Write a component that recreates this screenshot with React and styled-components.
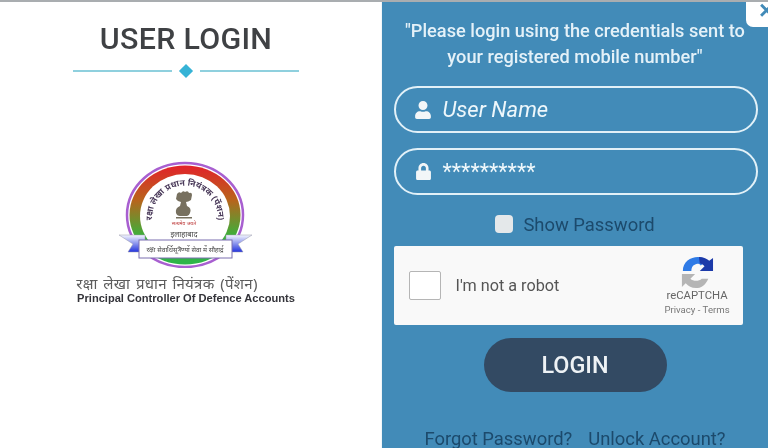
import React from "react";
import styled, { createGlobalStyle } from "styled-components";
import { FaUser, FaLock } from "react-icons/fa";

const GlobalStyle = createGlobalStyle`
  html, body {
    margin: 0;
    height: 100%;
    overflow: hidden;
    background: #fff;
  }
  * {
    box-sizing: border-box;
  }
`;

const Modal = styled.div`
  position: relative;
  width: 768px;
  height: 448px;
  display: grid;
  grid-template-columns: 381px 387px;
  border-top: 2px solid #a9adb0;
  font-family: Roboto, "Liberation Sans", sans-serif;
  overflow: hidden;
  filter: blur(0.45px);
`;

const LeftPanel = styled.section`
  display: flex;
  flex-direction: column;
  align-items: center;
  padding: 20px 9px 0 0;
  background: #fff;
`;

const Title = styled.h1`
  margin: 0;
  font-size: 30.4px;
  line-height: 34px;
  font-weight: 500;
  color: #3f4144;
  letter-spacing: 0.3px;
`;

const Divider = styled.div`
  display: flex;
  align-items: center;
  gap: 7px;
  margin-top: 10px;
`;

const DividerLine = styled.span`
  width: 99px;
  height: 1.5px;
  background: #8fd0de;
`;

const Diamond = styled.span`
  width: 10px;
  height: 10px;
  margin: 0 2px;
  background: #36b3d6;
  transform: rotate(45deg);
`;

const Logo = styled.svg`
  display: block;
  margin-top: 84px;
`;

const HindiName = styled.div`
  margin-top: 6px;
  margin-right: 38px;
  font-family: "Noto Sans", "Noto Sans CJK SC", sans-serif;
  font-size: 15px;
  line-height: 18px;
  letter-spacing: 0.3px;
  word-spacing: 1.5px;
  color: #5c5c5c;
`;

const EnglishName = styled.div`
  font-family: "Liberation Sans", sans-serif;
  font-size: 11.1px;
  line-height: 12px;
  font-weight: 700;
  color: #34343a;
  white-space: nowrap;
`;

const RightPanel = styled.section`
  display: flex;
  flex-direction: column;
  align-items: center;
  padding: 16px 0 0 0;
  background: #428bb8;
  border-left: 1px solid #f1f6f9;
`;

const Notice = styled.p`
  margin: 0;
  width: 350px;
  font-size: 18.2px;
  line-height: 26px;
  font-weight: 500;
  text-align: center;
  color: #e4f1f8;
`;

const Field = styled.div`
  width: 364px;
  height: 47px;
  margin-top: ${(p) => p.$top}px;
  margin-left: 1px;
  display: flex;
  align-items: center;
  gap: 10px;
  padding: 0 0 0 18px;
  border: 2px solid #e2f1f8;
  border-radius: 24px;
  color: #eef7fb;
  font-size: 22px;
`;

const FieldIcon = styled.span`
  display: flex;
  width: 19px;
  justify-content: center;
  color: #f2f6f8;
`;

const Placeholder = styled.span`
  font-style: italic;
  font-weight: 400;
`;

const Masked = styled.span`
  font-size: 21.6px;
  line-height: 24px;
  margin-top: 1px;
`;

const ShowRow = styled.label`
  display: flex;
  align-items: center;
  gap: 10px;
  margin-top: 17px;
  height: 24px;
  font-size: 18.4px;
  color: #1c4a6c;
`;

const Tick = styled.span`
  width: 18px;
  height: 18px;
  border-radius: 4px;
  background: #e4e8ea;
`;

const Captcha = styled.div`
  width: 349px;
  height: 79px;
  margin-top: 10px;
  margin-right: 14px;
  display: flex;
  align-items: center;
  padding: 0 0 0 15px;
  background: #f9f9f9;
  border-radius: 2px;
`;

const CaptchaBox = styled.span`
  width: 32px;
  height: 29px;
  background: #fff;
  border: 1.5px solid #b5b5b5;
  border-radius: 2px;
`;

const CaptchaLabel = styled.span`
  margin-left: 15px;
  font-size: 16.2px;
  color: #555;
`;

const CaptchaBrand = styled.div`
  margin-left: auto;
  width: 78px;
  display: flex;
  flex-direction: column;
  align-items: center;
  padding-right: 13px;
`;

const BrandName = styled.span`
  margin-top: 1px;
  font-size: 11.3px;
  line-height: 12px;
  color: #666;
`;

const BrandLinks = styled.span`
  margin-top: 3px;
  font-size: 9.6px;
  line-height: 10px;
  color: #777;
  white-space: nowrap;
`;

const LoginButton = styled.button`
  width: 183px;
  height: 54px;
  margin-top: 13px;
  border: none;
  border-radius: 27px;
  background: #334a63;
  color: #eef2f5;
  font-family: inherit;
  font-size: 23.4px;
  font-weight: 500;
`;

const Links = styled.div`
  display: flex;
  gap: 16px;
  margin-top: 37px;
  font-size: 18.4px;
  line-height: 20px;
  color: #1c4a6c;
  white-space: nowrap;
`;

const CloseButton = styled.div`
  position: absolute;
  top: -2px;
  right: 0;
  width: 22px;
  height: 27px;
  padding: 0 0 0 13px;
  background: #fff;
  border-bottom-left-radius: 7px;
  color: #428bb8;
  font-family: "Liberation Sans", sans-serif;
  font-size: 26px;
  line-height: 20px;
  font-weight: 700;
  overflow: hidden;
`;

function EmblemLogo() {
  return (
    <Logo width="136" height="108" viewBox="0 0 136 108">
      <defs>
        <linearGradient id="ring" x1="0" y1="0" x2="0" y2="1">
          <stop offset="0" stopColor="#e2222a" />
          <stop offset="0.35" stopColor="#b8641c" />
          <stop offset="0.7" stopColor="#3fae3a" />
          <stop offset="1" stopColor="#2db54a" />
        </linearGradient>
        <linearGradient id="ribbon" x1="0" y1="0" x2="0" y2="1">
          <stop offset="0" stopColor="#f4f6ff" />
          <stop offset="1" stopColor="#2233dd" />
        </linearGradient>
        <path id="arc" d="M 36 70 A 33 33 0 1 1 98 70" fill="none" />
      </defs>
      <ellipse cx="67" cy="55" rx="58" ry="52" fill="#fff" stroke="#a85fd0" strokeWidth="2.5" />
      <ellipse cx="67" cy="55" rx="55.5" ry="49.5" fill="url(#ring)" />
      <ellipse cx="67" cy="56" rx="45" ry="42" fill="#fff" />
      <text fontSize="8.6" fontWeight="700" fill="#4a3a5a" fontFamily="'Noto Sans', sans-serif">
        <textPath href="#arc" startOffset="50%" textAnchor="middle">
          रक्षा लेखा प्रधान नियंत्रक (पेंशन)
        </textPath>
      </text>
      <path
        d="M59 34 q2-3 4-1 q2-3 4-1 q3-2 4 1 q3-1 3 2 l-1 5 q-3 2-5 2 l1 4 q5 2 3 7 q-1 3-3 3 h-7 q-3 0-4-3 q-1-5 4-7 l1-4 q-3 0-5-3z"
        fill="#77705f"
      />
      <rect x="58" y="57" width="16" height="1.5" fill="#77705f" />
      <text x="66" y="65" fontSize="5" fill="#b33" textAnchor="middle" fontFamily="'Noto Sans', sans-serif">
        सत्यमेव जयते
      </text>
      <text x="66" y="77" fontSize="7.5" fill="#444" textAnchor="middle" fontFamily="'Noto Sans', sans-serif">
        इलाहाबाद
      </text>
      <path d="M1 75 L27 75 L27 92 L10 92 L15 84z" fill="url(#ribbon)" stroke="#99a" strokeWidth="0.5" />
      <path d="M134 75 L108 75 L108 92 L125 92 L120 84z" fill="url(#ribbon)" stroke="#99a" strokeWidth="0.5" />
      <rect x="21" y="80" width="93" height="18" fill="#fff" stroke="#7a6fb0" strokeWidth="1" />
      <text x="67" y="92" fontSize="6.6" fill="#444" textAnchor="middle" fontFamily="'Noto Sans', sans-serif">
        रक्षा सेवार्थिसूत्रेण्यों सेवा में सौहार्द्र
      </text>
    </Logo>
  );
}

function RecaptchaMark() {
  return (
    <svg width="36" height="33" viewBox="0 0 36 35">
      <path d="M3 16 C3 6 11 1 19 1 C23 1 26 3 28 5 L22 10 C20 8 18 8 16 9 C13 10 12 13 12 16z" fill="#2f7be6" />
      <path d="M20 1 C25 1 29 3 31 5 L35 2 V16 H21 L26 11 C24 9 23 8 21 8z" fill="#1c3aa9" />
      <path d="M2 19 H16 L11 24 C14 27 20 27 23 24 L30 24 C27 31 22 34 17 34 C12 34 9 32 6 29 L2 33z" fill="#b5b5b5" />
    </svg>
  );
}

export default function App() {
  return (
    <>
      <GlobalStyle />
      <Modal>
        <LeftPanel>
          <Title>USER LOGIN</Title>
          <Divider>
            <DividerLine />
            <Diamond />
            <DividerLine />
          </Divider>
          <EmblemLogo />
          <HindiName>रक्षा लेखा प्रधान नियंत्रक (पेंशन)</HindiName>
          <EnglishName>Principal Controller Of Defence Accounts</EnglishName>
        </LeftPanel>
        <RightPanel>
          <Notice>"Please login using the credentials sent to your registered mobile number"</Notice>
          <Field $top={16}>
            <FieldIcon>
              <FaUser size={18} />
            </FieldIcon>
            <Placeholder>User Name</Placeholder>
          </Field>
          <Field $top={15}>
            <FieldIcon>
              <FaLock size={17} />
            </FieldIcon>
            <Masked>**********</Masked>
          </Field>
          <ShowRow>
            <Tick />
            Show Password
          </ShowRow>
          <Captcha>
            <CaptchaBox />
            <CaptchaLabel>I'm not a robot</CaptchaLabel>
            <CaptchaBrand>
              <RecaptchaMark />
              <BrandName>reCAPTCHA</BrandName>
              <BrandLinks>Privacy - Terms</BrandLinks>
            </CaptchaBrand>
          </Captcha>
          <LoginButton>LOGIN</LoginButton>
          <Links>
            <span>Forgot Password?</span>
            <span>Unlock Account?</span>
          </Links>
        </RightPanel>
        <CloseButton>×</CloseButton>
      </Modal>
    </>
  );
}
